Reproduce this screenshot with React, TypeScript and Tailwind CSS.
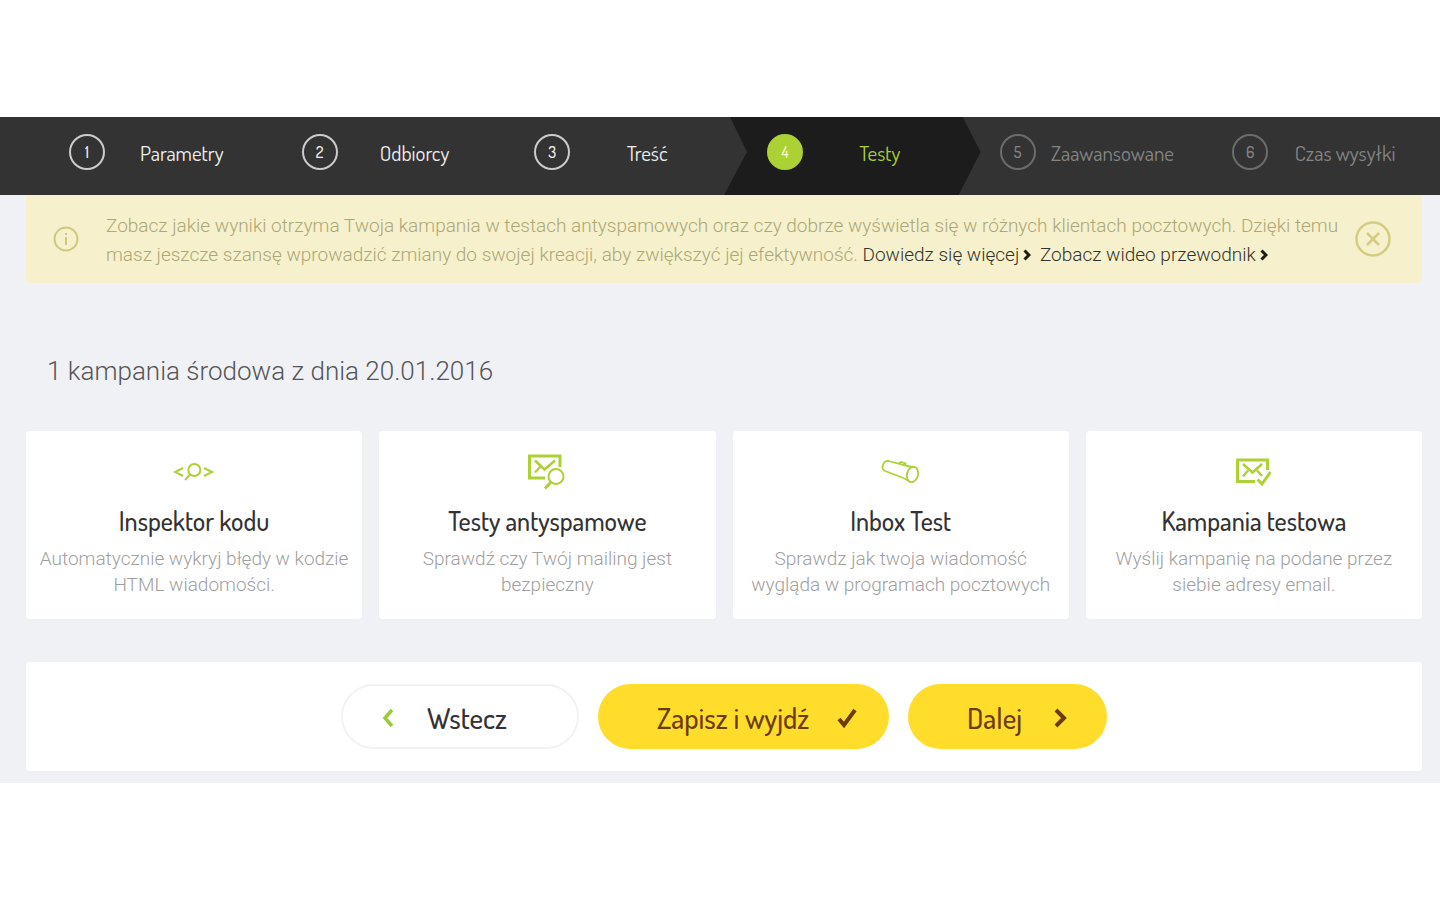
import type { ReactNode } from 'react';
import clsx from 'clsx';

const steps = ['Parametry', 'Odbiorcy', 'Treść', 'Testy', 'Zaawansowane', 'Czas wysyłki'];
const current = 3;

const condensed = "font-['Dosis','Liberation_Sans_Narrow','Roboto',sans-serif]";

const tests: { title: string; text: string; icon: ReactNode }[] = [
  {
    title: 'Inspektor kodu',
    text: 'Automatycznie wykryj błędy w kodzie HTML wiadomości.',
    icon: (
      <g strokeWidth="2">
        <path d="m10 17-8 4 8 4M31 17l8 4-8 4" />
        <circle cx="21.300" cy="19" r="6" />
        <path d="m17 23.500-5 5.500" />
      </g>
    ),
  },
  {
    title: 'Testy antyspamowe',
    text: 'Sprawdź czy Twój mailing jest bezpieczny',
    icon: (
      <g>
        <path d="M19 27H3.500V5H34V16" strokeWidth="3" />
        <path d="m9 9.500 9.500 9L29 9.500M9 21.500l5.500-6" strokeWidth="2.500" />
        <circle cx="30" cy="25.500" r="7.500" strokeWidth="2" />
        <path d="m25 31-6 6.500" strokeWidth="3" />
      </g>
    ),
  },
  {
    title: 'Inbox Test',
    text: 'Sprawdz jak twoja wiadomość wygląda w programach pocztowych',
    icon: (
      <g strokeWidth="1.800">
        <ellipse cx="32.500" cy="23.500" rx="5.500" ry="7.800" transform="rotate(15 32.500 23.500)" />
        <path d="M34.500 16c-4 0-7-.5-10.500-1.800L8.500 10C4 9 0 17 4.500 19.800l12.500 4.700c4 1.500 8 3 12 5.500" />
        <path d="m19 12.500 2-1.500 4.500 1.500v2" />
      </g>
    ),
  },
  {
    title: 'Kampania testowa',
    text: 'Wyślij kampanię na podane przez siebie adresy email.',
    icon: (
      <g>
        <path d="M22 30.500H4.500V9H34.500V19" strokeWidth="3" />
        <path d="m10 13 9.500 8.500L29 13M10 25.500l5-6M29 25l-5-5.500" strokeWidth="2.500" />
        <path d="m24.500 28.500 4.500 4.500 8.500-12" strokeWidth="3" />
      </g>
    ),
  },
];

function Steps() {
  return (
    <nav aria-label="Kroki kampanii" className="overflow-hidden bg-[#333333] pr-[18px] pl-[26px]">
      <ol className="grid grid-cols-6">
        {steps.map((step, i) => (
          <li key={step} className="relative h-[78px]">
            {i === current && (
              <div className="absolute inset-y-0 left-0 -right-6 bg-[#1c1c1c] [clip-path:polygon(6px_0,calc(100%-18px)_0,100%_45%,calc(100%-22px)_100%,0_100%,23px_45%)]" />
            )}
            <a
              href="#"
              aria-current={i === current ? 'step' : undefined}
              className={clsx(
                'relative flex h-[70px] items-center pl-[43px]',
                i < current && 'text-[#eeeeee]',
                i === current && 'text-[#acd135]',
                i > current && 'text-[#858585]',
              )}
            >
              <span
                className={clsx(
                  'flex size-9 shrink-0 items-center justify-center rounded-full border-2 text-base font-medium',
                  condensed,
                  i < current && 'border-[#cccccc]',
                  i === current && 'border-[#acd135] bg-[#acd135] text-[#f4ffd0]',
                  i > current && 'border-[#6c6c6c]',
                )}
              >
                {i + 1}
              </span>
              <span className={clsx('flex-1 pt-px text-center text-[21px] whitespace-nowrap', condensed)}>{step}</span>
            </a>
          </li>
        ))}
      </ol>
    </nav>
  );
}

function LinkArrow() {
  return (
    <svg
      viewBox="0 0 8 12"
      className="ml-1 inline-block h-3 w-2 align-baseline"
      fill="none"
      stroke="#1c1c10"
      strokeWidth="3"
    >
      <path d="m1.500 1.500 4.500 4.500-4.500 4.500" />
    </svg>
  );
}

function Notice() {
  return (
    <div className="flex min-h-[88px] items-center rounded-b bg-[#f6f1cc] pr-[31px] pl-[27px] text-[#aca777]">
      <svg viewBox="0 0 26 26" className="mr-[27px] size-[26px] shrink-0" fill="none" stroke="#cfc97f" strokeWidth="2">
        <circle cx="13" cy="13" r="11.500" />
        <path d="M13 11v8M13 7v2" />
      </svg>
      <p className="flex-1 pt-0.5 text-[19px] leading-[29px] font-light">
        Zobacz jakie wyniki otrzyma Twoja kampania w testach antyspamowych oraz czy dobrze wyświetla się w różnych
        klientach pocztowych. Dzięki temu masz jeszcze szansę wprowadzić zmiany do swojej kreacji, aby zwiększyć jej
        efektywność.{' '}
        <a href="#" className="mr-1 text-[#33332a]">
          Dowiedz się więcej
          <LinkArrow />
        </a>{' '}
        <a href="#" className="text-[#33332a]">
          Zobacz wideo przewodnik
          <LinkArrow />
        </a>
      </p>
      <button type="button" aria-label="Zamknij" className="ml-1 shrink-0">
        <svg viewBox="0 0 36 36" className="size-9" fill="none" stroke="#d3cc82" strokeWidth="2.500">
          <circle cx="18" cy="18" r="16.500" />
          <path d="m12 12 12 12M24 12 12 24" />
        </svg>
      </button>
    </div>
  );
}

export default function App() {
  return (
    <div className="min-h-screen bg-white pt-[117px] font-['Roboto',sans-serif]">
      <Steps />
      <main className="bg-[#eff1f5] pr-[18px] pb-3 pl-[26px]">
        <Notice />

        <h1 className="mt-[70px] ml-[21px] text-[26px] leading-9 font-light text-[#555555]">
          1 kampania środowa z dnia 20.01.2016
        </h1>

        <div className="mt-[42px] grid grid-cols-4 gap-[17px]">
          {tests.map((t) => (
            <a
              key={t.title}
              href="#"
              className="flex h-[188px] flex-col items-center rounded bg-white px-3 pt-5 text-center"
            >
              <svg viewBox="0 0 42 40" className="h-10 w-[42px]" fill="none" stroke="#acd135">
                {t.icon}
              </svg>
              <h2 className={clsx('mt-[14px] text-[26px] leading-8 font-medium text-[#333333]', condensed)}>
                {t.title}
              </h2>
              <p className="mt-[9px] text-[19px] leading-[26px] font-light text-[#a0a0a0]">{t.text}</p>
            </a>
          ))}
        </div>

        <div
          className={clsx(
            'mt-[43px] flex h-[109px] items-center justify-center gap-[19px] rounded bg-white text-[29px] font-medium',
            condensed,
          )}
        >
          <button
            type="button"
            className="flex h-[65px] w-[238px] items-center rounded-full border-2 border-[#f2f2f2] pt-0.5 pl-[38px] text-[#333333]"
          >
            <svg viewBox="0 0 14 20" className="mr-8 h-5 w-[14px]" fill="none" stroke="#9acb3b" strokeWidth="3.500">
              <path d="M11 2 4 10l7 8" />
            </svg>
            Wstecz
          </button>
          <button
            type="button"
            className="flex h-[65px] w-[291px] items-center justify-between rounded-full bg-[#ffdd2a] pt-0.5 pr-8 pl-[59px] text-[#6b3c08]"
          >
            Zapisz i wyjdź
            <svg viewBox="0 0 20 20" className="size-5" fill="none" stroke="#6b3c08" strokeWidth="4">
              <path d="m2 11 5 6L18 2" />
            </svg>
          </button>
          <button
            type="button"
            className="flex h-[65px] w-[199px] items-center justify-between rounded-full bg-[#ffdd2a] pt-0.5 pr-10 pl-[59px] text-[#6b3c08]"
          >
            Dalej
            <svg viewBox="0 0 14 20" className="h-5 w-[14px]" fill="none" stroke="#6b3c08" strokeWidth="4">
              <path d="m3 2 8 8-8 8" />
            </svg>
          </button>
        </div>
      </main>
    </div>
  );
}
